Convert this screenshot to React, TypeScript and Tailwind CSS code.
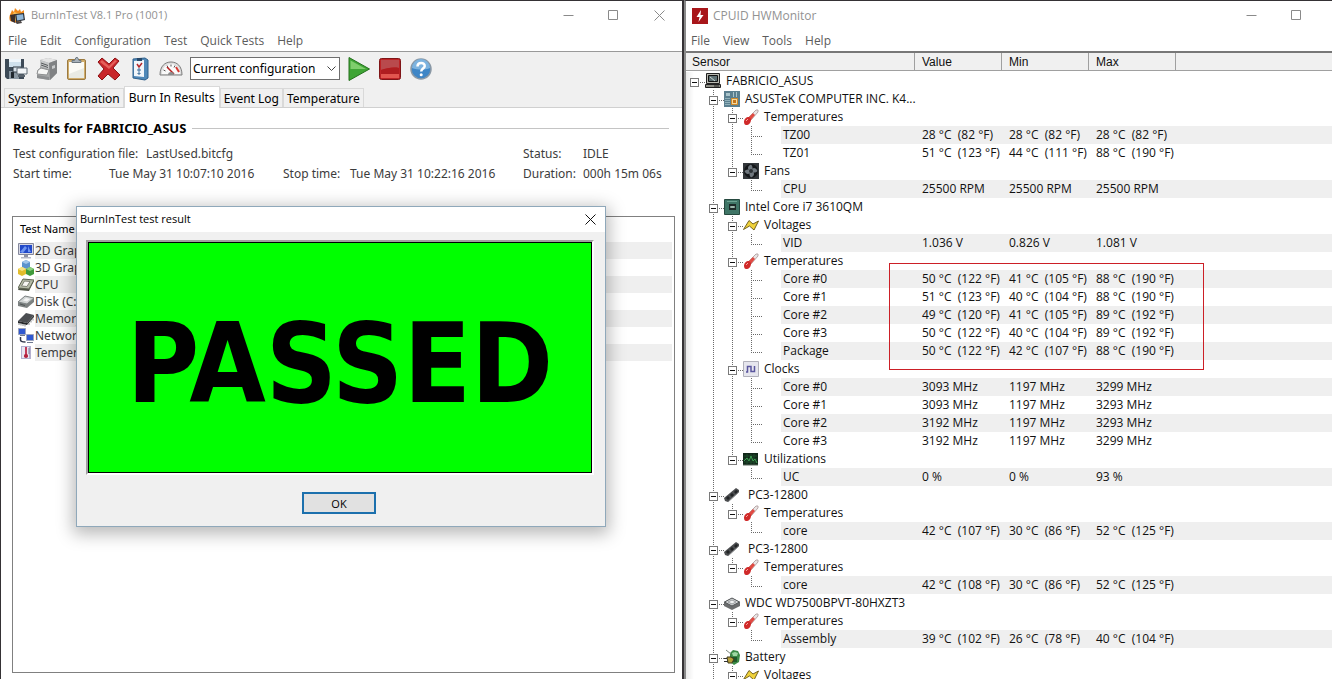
import { useState, type ReactNode } from "react"

/* ---------- shared icons ---------- */

function Svg({ size = 16, children }: { size?: number; children: ReactNode }) {
  return (
    <svg
      width={size}
      height={size}
      viewBox={`0 0 ${size} ${size}`}
      fill="none"
      className="block shrink-0"
      aria-hidden="true"
    >
      {children}
    </svg>
  )
}

function WindowButtons({ close = true }: { close?: boolean }) {
  return (
    <div className={`flex items-center text-[#8a8a8a] ${close ? "" : "pr-[13px]"}`}>
      <button aria-label="Minimize" className="flex h-7 w-[45px] items-center justify-center">
        <Svg size={11}>
          <path d="M0.5 5.5h10" stroke="currentColor" />
        </Svg>
      </button>
      <button aria-label="Maximize" className="flex h-7 w-[45px] items-center justify-center">
        <Svg size={11}>
          <path d="M0.5 0.5h9v9h-9z" stroke="currentColor" />
        </Svg>
      </button>
      {close && (
        <button aria-label="Close" className="flex h-7 w-[46px] items-center justify-center">
          <Svg size={11}>
            <path d="M0.5 0.5l10 10M10.5 0.5l-10 10" stroke="currentColor" />
          </Svg>
        </button>
      )}
    </div>
  )
}

/* ---------- BurnInTest ---------- */

function BurnLogo() {
  return (
    <Svg>
      <path d="M1 13C-1 8 2 6 3 2l2 2 1-4 3 3 2-2 1 3 3-2v6L9 15z" fill="#f08a1c" />
      <path d="M2 11C2 7 4 7 5 4l3 1 4 1-4 7z" fill="#fbc25a" />
      <path d="M1 7l5-1v9l-4-2z" fill="#3b2f2c" />
      <path d="M6 6l9-1 1 7-9 2z" fill="#2b3038" />
      <path d="M7.500 7l6.500-.8.700 5-6.500 1.300z" fill="#8fb6d8" />
      <path d="M6 14l6-1 1 2-5 1z" fill="#4a4444" />
    </Svg>
  )
}

function SaveIcon() {
  return (
    <Svg size={24}>
      <path d="M1 2h19v20H3l-2-2z" fill="#3d4a57" />
      <path d="M5 2h12v8H5z" fill="#cfe0ec" />
      <path d="M5 2h12v3H5z" fill="#eef5fa" />
      <path d="M5 14h10v8H5z" fill="#8b98a3" />
      <path d="M7 15h3v6H7z" fill="#20272e" />
      <path d="M9 10h8v5H9z" fill="#d9e2ea" stroke="#2c3640" />
      <path d="M13 11h10v6H13z" fill="#f2f5f8" stroke="#5c6873" />
      <path d="M14 19h7" stroke="#59636d" strokeWidth="2" />
    </Svg>
  )
}

function PrinterIcon() {
  return (
    <Svg size={24}>
      <path d="M5 3l8-2 9 2v13l-7 7-13-2v-7l3-3z" fill="#a7a9aa" />
      <path d="M5 3l8-2 9 2-8 3z" fill="#e4e4e4" />
      <path d="M14 6l8-3v13l-7 7z" fill="#808284" />
      <path d="M5 3l9 3v6L5 9z" fill="#c5c7c8" />
      <path d="M6 6l7 2.500M6 8l7 2.500" stroke="#55585a" />
      <path d="M3 13l3-2 8 2-2 5-10-1z" fill="#f6f6f5" stroke="#8d8f90" />
      <path d="M2 18l12 2v3L2 21z" fill="#8d8f91" />
      <path d="M17 9l3-1v3l-3 1z" fill="#c9cbcc" />
    </Svg>
  )
}

function ClipboardIcon() {
  return (
    <Svg size={24}>
      <rect x="1.500" y="2.500" width="18" height="20" rx="1.500" fill="#d0ad6c" stroke="#9b7a41" />
      <path d="M3 5h15v16H3z" fill="#fbfbf6" />
      <path d="M3 17l15-6v10H3z" fill="#e9ebe4" />
      <path d="M6 3.500h2.500L10 .500h1.500L13 3.500h2v2H6z" fill="#a8b2ba" stroke="#6d7880" />
    </Svg>
  )
}

function CrossIcon() {
  return (
    <Svg size={24}>
      <path
        d="M1 5l4-4 7 6 6-6 4 3-6 7 7 7-5 5-7-6-6 6-4-4 6-7z"
        fill="#c8262a"
        stroke="#8d1215"
      />
      <path d="M3 5l2-2 7 6 6-6 2 1-8 8z" fill="#e5605a" />
    </Svg>
  )
}

function ChecklistIcon() {
  return (
    <Svg size={24}>
      <path d="M5 2l12-1 3 2v18l-3 2-12-2z" fill="#4f88b8" stroke="#2f608c" />
      <path d="M6 4l10-1v17l-10-1z" fill="#f2f6fa" />
      <path d="M9 1h5v3H9z" fill="#27496a" />
      <path d="M9 7l2 3 3-4" stroke="#b3272b" strokeWidth="1.500" />
      <path d="M10 12h2v2h-2zM10 16h2v1h-2z" stroke="#3c6f9b" />
    </Svg>
  )
}

function GaugeIcon() {
  return (
    <Svg size={24}>
      <path d="M1 18C1 9 6 5 12 5s11 4 11 13z" fill="#dedede" stroke="#7c7c7c" />
      <path d="M3 17c0-6 4-10 9-10s9 4 9 10z" fill="#fafafa" />
      <path d="M4.500 13l2 1M8 8.500l1 2M12 7.500v2M16 8.500l-1 2" stroke="#555" />
      <path d="M17 10l3 5" stroke="#d53a32" strokeWidth="2" />
      <path d="M8 10l7 7" stroke="#b81f1f" strokeWidth="1.500" />
      <path d="M9 18c0-2 1-3 3-3s3 1 3 3z" fill="#8c8c8c" />
    </Svg>
  )
}

function PlayIcon() {
  return (
    <Svg size={24}>
      <path d="M2 .500L22.500 12 2 23.500z" fill="#3fa535" stroke="#24711d" strokeLinejoin="round" />
      <path d="M3.500 3.500L19 12H3.500z" fill="#7fce6c" />
    </Svg>
  )
}

function StopIcon() {
  return (
    <Svg size={24}>
      <rect x="1.500" y="1.500" width="21" height="21" rx="2" fill="#bd2326" stroke="#7f1517" />
      <path d="M3 3h18v8c-6-1-12 0-18 2z" fill="#b94a4d" />
      <path d="M3 13c6-2 12-3 18-2v10H3z" fill="#b01d20" />
      <path d="M3 17h18v4H3z" fill="#e2564f" />
    </Svg>
  )
}

function HelpIcon() {
  return (
    <Svg size={24}>
      <circle cx="12" cy="12" r="10" fill="#3f86c6" stroke="#8a98a5" strokeWidth="1.500" />
      <path d="M3 11a9 9 0 0 1 18 0c-5 2-12 2-18 0z" fill="#7db3df" />
      <path
        d="M8.500 9.500C8.500 5 16 5 15.700 9.200c-.2 2.300-3.500 2.600-3.500 5.300"
        stroke="#fff"
        strokeWidth="2.500"
      />
      <circle cx="12.200" cy="17.700" r="1.500" fill="#fff" />
    </Svg>
  )
}

function MonitorIcon() {
  return (
    <Svg>
      <path d="M.5.5h15v11H.5z" fill="#d6d8e4" stroke="#85889c" />
      <path d="M2 2h12v8H2z" fill="#2249c9" />
      <path d="M2 9l5-6 2 2-4 5zM10 3l3 6h-3z" fill="#6f95f0" />
      <path d="M6 12h4v2H6z" fill="#8f92a4" />
      <path d="M3 14h10v1.500H3z" fill="#b6b8c6" />
    </Svg>
  )
}

function CubesIcon() {
  return (
    <Svg>
      <path d="M4 2l4-2 4 2v5L8 9 4 7z" fill="#5c93cd" />
      <path d="M4 2l4 2 4-2-4-2z" fill="#a3c6ea" />
      <path d="M0 9l4-2 4 2v5l-4 2-4-2z" fill="#e2bd2c" />
      <path d="M0 9l4 2 4-2-4-2z" fill="#f7e384" />
      <path d="M8 9l4-2 4 2v5l-4 2-4-2z" fill="#3f9a3b" />
      <path d="M8 9l4 2 4-2-4-2z" fill="#8bcf7d" />
    </Svg>
  )
}

function CpuIcon() {
  return (
    <Svg>
      <path d="M5 3l11 1-5 10-11-1z" fill="#4c5244" />
      <path d="M5 2l11 1-5 9-11-1z" fill="#b5bba8" stroke="#5f6553" />
      <path d="M6.500 4l5.500.5-3 5-5.500-.5z" fill="#f8f8f4" stroke="#7f8375" />
    </Svg>
  )
}

function DiskIcon() {
  return (
    <Svg>
      <path d="M0 8l7-6 9 2v4l-7 6-9-2z" fill="#7c8181" />
      <path d="M0 8l7-6 9 2-7 6z" fill="#cfd3d3" stroke="#7f8585" />
      <path d="M5 6.500l3-2.500 4 1-3 2.500z" fill="#f3f4f4" />
      <path d="M2 10l5 1.500" stroke="#4f5555" />
    </Svg>
  )
}

function ChipIcon() {
  return (
    <Svg>
      <path d="M0 10l8-8 8 2-7 8z" fill="#4b4e52" />
      <path d="M0 10l9 2v2l-9-2z" fill="#26282b" />
      <path d="M9 12l7-8v2l-7 8z" fill="#35383b" />
      <path d="M1 12v2M3 12.500v2M5 13v2M7 13.500v2M11 12v2M13 9.500v2M15 7.500v2" stroke="#8c8f92" />
    </Svg>
  )
}

function NetworkIcon() {
  return (
    <Svg>
      <path d="M.5.5h7v6h-7z" fill="#2f58d0" stroke="#9aa3bd" />
      <path d="M8.500 6.500h7v6h-7z" fill="#2f58d0" stroke="#9aa3bd" />
      <path d="M2 7.500h5M9 14.500h6" stroke="#6f7890" />
      <path d="M2.500 9v3c0 2 2 2 5 2" stroke="#30364a" strokeWidth="1.500" />
    </Svg>
  )
}

function TempSmallIcon() {
  return (
    <Svg>
      <path d="M3 1h10v13H3z" fill="#b4b0cf" />
      <path d="M4 2h7v11H4z" fill="#e8e5f1" />
      <path d="M7 2h2v7l1 3H6l1-3z" fill="#c23a58" />
      <circle cx="8" cy="11" r="2" fill="#b3213f" />
      <path d="M10 4h2M10 6h2M10 8h2" stroke="#7f7c9e" />
    </Svg>
  )
}

const toolbar = [
  { label: "Save", icon: <SaveIcon /> },
  { label: "Print", icon: <PrinterIcon /> },
  { label: "Copy report", icon: <ClipboardIcon /> },
  { label: "Clear results", icon: <CrossIcon /> },
  { label: "Test preferences", icon: <ChecklistIcon /> },
  { label: "Benchmark", icon: <GaugeIcon /> },
]

const runControls = [
  { label: "Start", icon: <PlayIcon /> },
  { label: "Stop", icon: <StopIcon /> },
  { label: "Help", icon: <HelpIcon /> },
]

const tests = [
  { name: "2D Graphics", icon: <MonitorIcon /> },
  { name: "3D Graphics", icon: <CubesIcon /> },
  { name: "CPU", icon: <CpuIcon /> },
  { name: "Disk (C:)", icon: <DiskIcon /> },
  { name: "Memory (RAM)", icon: <ChipIcon /> },
  { name: "Network 1", icon: <NetworkIcon /> },
  { name: "Temperature", icon: <TempSmallIcon /> },
]

function MenuBar({ items }: { items: string[] }) {
  return (
    <nav className="flex h-[21px] shrink-0 items-center gap-[13px] px-[7px] text-xs text-[#5c5c5c]">
      {items.map((item) => (
        <button key={item}>{item}</button>
      ))}
    </nav>
  )
}

function ResultDialog({ onClose }: { onClose: () => void }) {
  return (
    <div
      role="dialog"
      aria-label="BurnInTest test result"
      className="absolute top-[205px] left-[75px] flex w-[530px] flex-col border border-[#8fa8ba] bg-[#f0f0f0] shadow-[0_4px_16px_3px_rgba(0,0,0,0.28)]"
    >
      <div className="flex h-[25px] items-center justify-between bg-white pl-[3px] text-black">
        <span className="text-[11px]">BurnInTest test result</span>
        <button aria-label="Close dialog" onClick={onClose} className="px-[9px]">
          <Svg size={11}>
            <path d="M0.500 0.500l10 10M10.500 0.500l-10 10" stroke="#111" />
          </Svg>
        </button>
      </div>
      <div className="mt-2 mr-[11px] ml-[9px] border-2 border-t-[#a0a0a0] border-r-white border-b-white border-l-[#a0a0a0]">
        <div className="flex h-[231px] items-center justify-center border border-black bg-[#00ff00] pt-3 font-['DejaVu_Sans_Condensed','Open_Sans',sans-serif] text-[110px] leading-none font-bold text-black">
          PASSED
        </div>
      </div>
      <div className="flex justify-center pt-[17px] pr-1 pb-3">
        <button
          onClick={onClose}
          className="h-[22px] w-[74px] border-2 border-[#1c70ad] bg-[#e1e1e1] text-[11px] leading-none text-black"
        >
          OK
        </button>
      </div>
    </div>
  )
}

function BurnInTest() {
  const [open, setOpen] = useState(true)
  const tabs = ["System Information", "Burn In Results", "Event Log", "Temperature"]

  return (
    <section className="relative flex h-full flex-col border-t border-r-2 border-l border-[#353235] bg-white">
      <header className="flex h-[29px] shrink-0 items-center justify-between pl-[8px] text-[#929292]">
        <div className="flex items-center gap-[6px] text-[11px]">
          <BurnLogo />
          <h1>BurnInTest V8.1 Pro (1001)</h1>
        </div>
        <WindowButtons />
      </header>
      <MenuBar items={["File", "Edit", "Configuration", "Test", "Quick Tests", "Help"]} />

      <div className="border-t border-b border-t-[#999] border-b-[#d0d0d0] bg-[#f0f0f0] font-['Noto_Sans',sans-serif] text-xs text-black">
        <div className="flex h-[33px] items-center gap-[7px] px-[3px]">
          {toolbar.map((t) => (
            <button key={t.label} aria-label={t.label}>
              {t.icon}
            </button>
          ))}
          <div className="relative">
            <select
              aria-label="Configuration"
              className="h-[23px] w-[150px] appearance-none border border-[#6e6e6e] bg-white pl-[2px] text-xs"
            >
              <option>Current configuration</option>
            </select>
            <svg
              width="9"
              height="6"
              viewBox="0 0 9 6"
              fill="none"
              className="pointer-events-none absolute top-[9px] right-1"
              aria-hidden="true"
            >
              <path d="M0.500 0.500l4 4 4-4" stroke="#444" />
            </svg>
          </div>
          {runControls.map((t) => (
            <button key={t.label} aria-label={t.label}>
              {t.icon}
            </button>
          ))}
        </div>
        <div role="tablist" className="flex items-end pt-px pl-[3px]">
          {tabs.map((tab) => {
            const active = tab === "Burn In Results"
            return (
              <button
                key={tab}
                role="tab"
                aria-selected={active}
                className={
                  active
                    ? "-mb-px h-[22px] border border-b-0 border-[#d9d9d9] bg-white px-1"
                    : "h-[19px] border border-b-0 border-[#d9d9d9] px-[3px] pt-[2px]"
                }
              >
                {tab}
              </button>
            )
          })}
        </div>
      </div>

      <div className="flex min-h-0 grow flex-col pt-[10px] pr-[7px] pb-[6px] pl-[11px] font-['Noto_Sans',sans-serif] text-xs text-[#3c3c3c]">
        <div className="flex items-center gap-[6px] pr-[6px] pl-px">
          <h2 className="text-[13px] leading-5 font-bold text-black">Results for FABRICIO_ASUS</h2>
          <div className="h-px grow bg-[#c4c4c4]" />
        </div>
        <div className="flex flex-col pt-[6px] pl-px leading-5">
          <div className="flex">
            <span className="w-[133px]">Test configuration file:</span>
            <span className="w-[377px]">LastUsed.bitcfg</span>
            <span className="w-[60px]">Status:</span>
            <span>IDLE</span>
          </div>
          <div className="flex">
            <span className="w-[96px]">Start time:</span>
            <span className="w-[174px]">Tue May 31 10:07:10 2016</span>
            <span className="w-[67px]">Stop time:</span>
            <span className="w-[173px]">Tue May 31 10:22:16 2016</span>
            <span className="w-[60px]">Duration:</span>
            <span className="whitespace-nowrap">000h 15m 06s</span>
          </div>
        </div>
        <div className="mt-8 grow border border-[#808080] bg-white pr-[2px]">
          <table className="w-full border-collapse">
            <thead>
              <tr>
                <th className="h-[25px] pl-[7px] text-left text-[11px] font-normal text-black">
                  Test Name
                </th>
              </tr>
            </thead>
            <tbody>
              {tests.map((t, i) => (
                <tr key={t.name}>
                  <td className="p-0">
                    <div className="flex h-[17px] items-center pl-[5px]">
                      {t.icon}
                      <span
                        className={`ml-px h-[17px] grow leading-[17px] ${i % 2 === 0 ? "bg-[#efefef]" : ""}`}
                      >
                        {t.name}
                      </span>
                    </div>
                  </td>
                </tr>
              ))}
            </tbody>
          </table>
        </div>
      </div>

      {open && <ResultDialog onClose={() => setOpen(false)} />}
    </section>
  )
}

/* ---------- HWMonitor ---------- */

type IconName =
  | "pc"
  | "board"
  | "temp"
  | "fan"
  | "cpu"
  | "volt"
  | "clock"
  | "util"
  | "ram"
  | "hdd"
  | "battery"

const icons: Record<IconName, ReactNode> = {
  pc: (
    <Svg>
      <path d="M1.500.500h13v10h-13z" fill="#b9bab2" stroke="#222" />
      <path d="M3.500 2.500h9v6h-9z" fill="#5d6f72" stroke="#111" />
      <path d="M5 4l5 4" stroke="#c9d6d4" />
      <path d="M.500 11.500h15v3H.500z" fill="#8d8e86" stroke="#222" />
      <path d="M9 13h5" stroke="#222" />
    </Svg>
  ),
  board: (
    <Svg>
      <path d="M0 0h16v16H0z" fill="#5b7f8f" />
      <path d="M2 2h4v3H2zM9 1h1v5H9zM12 1h1v5h-1z" fill="#a9c4cb" />
      <path d="M1 7.500h5M1 9.500h5M1 11.500h5M1 13.500h5" stroke="#8fb0b9" />
      <path d="M7.500 7.500h6v6h-6z" fill="#f3d9a0" stroke="#d38b2a" />
      <path d="M9 9h3v3H9z" fill="#c6761b" />
    </Svg>
  ),
  temp: (
    <Svg>
      <path d="M5 9L13 1l2 0 0 2-7 8z" fill="#e9e4e4" stroke="#b7a7a7" />
      <path d="M5 9l5-5 2 2-5 6z" fill="#e04b43" />
      <path d="M1 13c0-3 2-5 5-5l2 2c0 4-2 6-5 6-1 0-2-1-2-3z" fill="#d02a2a" />
      <path d="M3 12l2-2" stroke="#f7a49b" />
    </Svg>
  ),
  fan: (
    <Svg>
      <path d="M0 0h16v16H0z" fill="#33373b" />
      <circle cx="8" cy="8" r="7" fill="#14171a" />
      <path
        d="M8 8C4 7 4 3 8 1.500c2 2 2 4.500 0 6.500zM8 8c1-4 5-4 6.500 0-2 2-4.500 2-6.500 0zM8 8c4 1 4 5 0 6.500-2-2-2-4.500 0-6.500zM8 8c-1 4-5 4-6.500 0 2-2 4.500-2 6.500 0z"
        fill="#6f777e"
      />
      <circle cx="8" cy="8" r="2" fill="#2c3135" />
    </Svg>
  ),
  cpu: (
    <Svg>
      <path d="M.500.500h15v15H.500z" fill="#3f7566" stroke="#26493f" />
      <path d="M5 5h7v6H5z" fill="#1d2a28" />
      <path d="M6.500 7.500h4v1h-4z" stroke="#9cb8ad" />
      <path d="M3 2.500h10" stroke="#6ea493" />
    </Svg>
  ),
  volt: (
    <Svg>
      <path
        d="M.5 12.500L6 3.500l4 3.500 5.500-3L11 13 6.500 9z"
        fill="#f0d23a"
        stroke="#75631f"
        strokeLinejoin="round"
      />
    </Svg>
  ),
  clock: (
    <Svg>
      <path d="M.500.500h15v15H.500z" fill="#e6e6ee" stroke="#b1b1bb" />
      <path d="M3 11h1.500V5.500H8V10.500h3.500V5" stroke="#5a569e" strokeWidth="1.500" />
    </Svg>
  ),
  util: (
    <Svg>
      <path d="M0 2h15v12H0z" fill="#12281a" />
      <path d="M1 5h13M1 8h13M1 11h13M4 3v10M8 3v10M11 3v10" stroke="#1d4a2a" />
      <path d="M1 10l3-3 2 3 2-5 2 5 2-2 2 4" stroke="#3f9f52" />
      <path d="M0 14h15" stroke="#5a6b5f" />
    </Svg>
  ),
  ram: (
    <Svg>
      <path d="M0 11L12 1l3 2v2L4 15l-3-1z" fill="#4b4d4f" />
      <path d="M2 11l2-2 2 2-2 2zM6 8l2-2 2 2-2 2zM10 5l2-2 2 1-2 3z" fill="#222426" />
      <path d="M4 15L15 5" stroke="#8a8c8e" />
    </Svg>
  ),
  hdd: (
    <Svg>
      <path d="M0 7l8-4 8 4v4l-8 4-8-4z" fill="#6b6d6e" />
      <path d="M.500 7L8 3l7.500 4L8 11z" fill="#d3d5d6" stroke="#55585a" />
      <path d="M4 7l4-2 4 2-4 2z" fill="#f1f2f2" stroke="#9a9da0" />
    </Svg>
  ),
  battery: (
    <Svg>
      <path d="M6 4l3-3 5 1 2 4-1 7-5 3-4-3z" fill="#3b8a45" />
      <path d="M8 4l3-1 3 1-1 3H9z" fill="#9ed8a3" />
      <path d="M7 8h6v5H8z" fill="#1f5a2a" />
      <path d="M3 8h4l3 2-2 4H4z" fill="#b79f3a" stroke="#3f3a1c" />
      <path d="M0 9.500h3M0 12.500h4" stroke="#333" />
      <path d="M2 1l5 4" stroke="#7c8880" />
    </Svg>
  ),
}

type Node = {
  label: string
  icon?: IconName
  values?: [string, string, string]
  indent?: boolean
  children?: Node[]
}

const leaf = (label: string, value: string, min: string, max: string): Node => ({
  label,
  values: [value, min, max],
})

const tree: Node = {
  label: "FABRICIO_ASUS",
  icon: "pc",
  children: [
    {
      label: "ASUSTeK COMPUTER INC. K4...",
      icon: "board",
      children: [
        {
          label: "Temperatures",
          icon: "temp",
          children: [
            leaf("TZ00", "28 °C  (82 °F)", "28 °C  (82 °F)", "28 °C  (82 °F)"),
            leaf("TZ01", "51 °C  (123 °F)", "44 °C  (111 °F)", "88 °C  (190 °F)"),
          ],
        },
        {
          label: "Fans",
          icon: "fan",
          children: [leaf("CPU", "25500 RPM", "25500 RPM", "25500 RPM")],
        },
      ],
    },
    {
      label: "Intel Core i7 3610QM",
      icon: "cpu",
      children: [
        {
          label: "Voltages",
          icon: "volt",
          children: [leaf("VID", "1.036 V", "0.826 V", "1.081 V")],
        },
        {
          label: "Temperatures",
          icon: "temp",
          children: [
            leaf("Core #0", "50 °C  (122 °F)", "41 °C  (105 °F)", "88 °C  (190 °F)"),
            leaf("Core #1", "51 °C  (123 °F)", "40 °C  (104 °F)", "88 °C  (190 °F)"),
            leaf("Core #2", "49 °C  (120 °F)", "41 °C  (105 °F)", "89 °C  (192 °F)"),
            leaf("Core #3", "50 °C  (122 °F)", "40 °C  (104 °F)", "89 °C  (192 °F)"),
            leaf("Package", "50 °C  (122 °F)", "42 °C  (107 °F)", "88 °C  (190 °F)"),
          ],
        },
        {
          label: "Clocks",
          icon: "clock",
          children: [
            leaf("Core #0", "3093 MHz", "1197 MHz", "3299 MHz"),
            leaf("Core #1", "3093 MHz", "1197 MHz", "3293 MHz"),
            leaf("Core #2", "3192 MHz", "1197 MHz", "3293 MHz"),
            leaf("Core #3", "3192 MHz", "1197 MHz", "3299 MHz"),
          ],
        },
        {
          label: "Utilizations",
          icon: "util",
          children: [leaf("UC", "0 %", "0 %", "93 %")],
        },
      ],
    },
    {
      label: "PC3-12800",
      icon: "ram",
      indent: true,
      children: [
        {
          label: "Temperatures",
          icon: "temp",
          children: [leaf("core", "42 °C  (107 °F)", "30 °C  (86 °F)", "52 °C  (125 °F)")],
        },
      ],
    },
    {
      label: "PC3-12800",
      icon: "ram",
      indent: true,
      children: [
        {
          label: "Temperatures",
          icon: "temp",
          children: [leaf("core", "42 °C  (108 °F)", "30 °C  (86 °F)", "52 °C  (125 °F)")],
        },
      ],
    },
    {
      label: "WDC WD7500BPVT-80HXZT3",
      icon: "hdd",
      children: [
        {
          label: "Temperatures",
          icon: "temp",
          children: [leaf("Assembly", "39 °C  (102 °F)", "26 °C  (78 °F)", "40 °C  (104 °F)")],
        },
      ],
    },
    {
      label: "Battery",
      icon: "battery",
      children: [{ label: "Voltages", icon: "volt", children: [] }],
    },
  ],
}

type Row = { node: Node; depth: number; index: number; last: boolean; lines: boolean[] }

// lines[d] is true while the branch at depth d still has siblings below
function flatten(node: Node, depth = 0, index = 0, last = true, lines: boolean[] = []): Row[] {
  const kids = node.children ?? []
  // the device list goes on below the visible part of the window
  const end = last && depth !== 1
  return [
    { node, depth, index, last: end, lines },
    ...kids.flatMap((kid, i) =>
      flatten(kid, depth + 1, i, i === kids.length - 1, [...lines, !end]),
    ),
  ]
}

const STEP = 19

function Gutter({ row }: { row: Row }) {
  const { depth, last, lines, node } = row
  const x = 8.5 + depth * STEP
  const width = (depth + 1) * STEP
  return (
    <svg
      width={width}
      height="18"
      viewBox={`0 0 ${width} 18`}
      fill="none"
      className="block shrink-0"
      aria-hidden="true"
    >
      <g stroke="#6a6a6a" strokeDasharray="1 1">
        {lines.map((on, d) => on && <path key={d} d={`M${8.5 + d * STEP} 0V18`} />)}
        {depth > 0 && <path d={`M${x} 0V${last ? 10 : 18}`} />}
        <path d={`M${x - 0.5} 10.5H${x + 10.5}`} />
      </g>
      {node.icon && (
        <>
          <rect x={x - 4} y="6.500" width="8" height="8" fill="#fff" stroke="#7a7a7a" />
          <path d={`M${x - 2.5} 10.5h5`} stroke="#111" />
        </>
      )}
    </svg>
  )
}

function SensorRow({ row }: { row: Row }) {
  const { node, index } = row
  const shade = node.values && index % 2 === 0 ? "bg-[#efefef]" : ""
  return (
    <tr>
      <td className="p-0">
        <div className="flex h-[18px] items-center whitespace-nowrap">
          <Gutter row={row} />
          {node.icon ? (
            <>
              {icons[node.icon]}
              <span className={`leading-[18px] ${node.indent ? "pl-2" : "pl-[5px]"}`}>
                {node.label}
              </span>
            </>
          ) : (
            <span className={`ml-[19px] h-[18px] grow pl-[2px] leading-[18px] ${shade}`}>
              {node.label}
            </span>
          )}
        </div>
      </td>
      {[0, 1, 2].map((i) => (
        <td key={i} className={`py-0 pr-0 pl-[7px] leading-[18px] whitespace-pre ${shade}`}>
          {node.values?.[i]}
        </td>
      ))}
      <td className={shade} />
    </tr>
  )
}

function HwMonitor() {
  return (
    <section className="flex h-full min-w-0 flex-col overflow-hidden border-t border-l-2 border-t-[#353235] border-l-[#8a8a8a] bg-white">
      <header className="flex h-[29px] shrink-0 items-center justify-between pl-[6px] text-[#929292]">
        <div className="flex items-center gap-[5px] text-xs">
          <Svg>
            <path d="M0 0h16v16H0z" fill="#a8161a" />
            <path d="M9 2L4.500 9h3L6.500 14 11.500 7h-3z" fill="#fff" />
          </Svg>
          <h1>CPUID HWMonitor</h1>
        </div>
        <WindowButtons close={false} />
      </header>
      <div className="-ml-[2px]">
        <MenuBar items={["File", "View", "Tools", "Help"]} />
      </div>

      <div className="relative min-h-0 grow border-t-2 border-[#777] bg-[linear-gradient(to_right,#ebebeb,#fff_8px)]">
        <table className="w-full table-fixed border-separate border-spacing-0 text-xs text-[#111]">
          <colgroup>
            <col className="w-[229px]" />
            <col className="w-[87px]" />
            <col className="w-[87px]" />
            <col className="w-[87px]" />
            <col />
          </colgroup>
          <thead className="font-['Liberation_Sans',Arial,sans-serif] text-xs">
            <tr>
              {["Sensor", "Value", "Min", "Max", ""].map((h) => (
                <th key={h} className="h-[19px] bg-white p-0 text-left align-top font-normal">
                  <div
                    className={`h-[18px] border-b border-[#a0a0a0] bg-[#f0f0f0] leading-[19px] ${
                      h === "Sensor" ? "border-r pl-[6px]" : h ? "border-r pl-[7px]" : ""
                    }`}
                  >
                    {h}
                  </div>
                </th>
              ))}
            </tr>
          </thead>
          <tbody>
            {flatten(tree).map((row, i) => (
              <SensorRow key={i} row={row} />
            ))}
          </tbody>
        </table>
        {/* highlight over the core temperatures */}
        <div className="pointer-events-none absolute top-[210px] left-[203px] h-[107px] w-[315px] border border-[#cc1f26]" />
      </div>
    </section>
  )
}

export default function App() {
  return (
    <main className="grid h-screen grid-cols-[684fr_648fr] overflow-hidden bg-white font-['Open_Sans',sans-serif]">
      <BurnInTest />
      <HwMonitor />
    </main>
  )
}
